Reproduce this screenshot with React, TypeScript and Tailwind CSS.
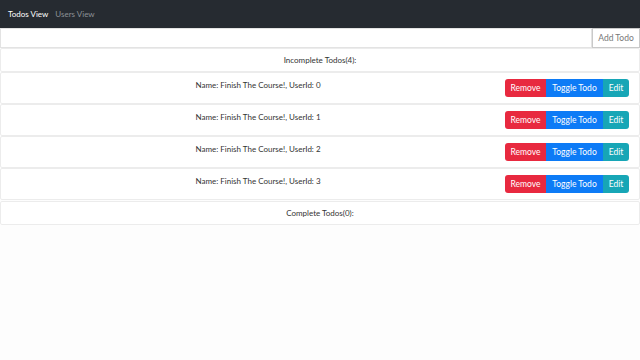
import React from "react";

const todos = [0, 1, 2, 3];

const TodoRow = ({ id }: { id: number }) => {
    return (
        <div className="flex h-[32px] items-center rounded-[2px] border border-[#ececec] bg-white">
            <div className="flex-1 -mt-[6px] pl-[10px] text-center text-[8px] text-[#333]">
                Name: Finish The Course!, UserId: {id}
            </div>
            <div className="mr-[10px] flex h-[18px] whitespace-nowrap text-[8.5px] text-white">
                <button className="w-[41px] rounded-l-[3px] bg-[#e8293f]">Remove</button>
                <button className="w-[57px] bg-[#0d7bf6]">Toggle Todo</button>
                <button className="w-[26px] rounded-r-[3px] bg-[#17a6b6]">Edit</button>
            </div>
        </div>
    );
};

export default function App() {
    return (
        <div className="h-[360px] w-[640px] bg-[#fdfdfd] font-['Lato',sans-serif]">
            <nav className="flex h-[28px] items-center gap-[7px] bg-[#262b31] px-[8px] text-[8px]">
                <span className="text-white">Todos View</span>
                <span className="text-[#8c9196]">Users View</span>
            </nav>

            <div className="flex h-[20px]">
                <input className="flex-1 border border-[#e3e3e3] bg-white outline-none" />
                <button className="w-[48px] border border-[#c9c9c9] bg-white text-[8.5px] text-[#777]">
                    Add Todo
                </button>
            </div>

            <div className="flex h-[24px] items-center justify-center rounded-[2px] border border-[#ececec] bg-white text-[8px] text-[#333]">
                Incomplete Todos(4):
            </div>

            {todos.map((id) => (
                <TodoRow key={id} id={id} />
            ))}

            <div className="mt-[1px] flex h-[24px] items-center justify-center rounded-[2px] border border-[#ececec] bg-white text-[8px] text-[#333]">
                Complete Todos(0):
            </div>
        </div>
    );
}
